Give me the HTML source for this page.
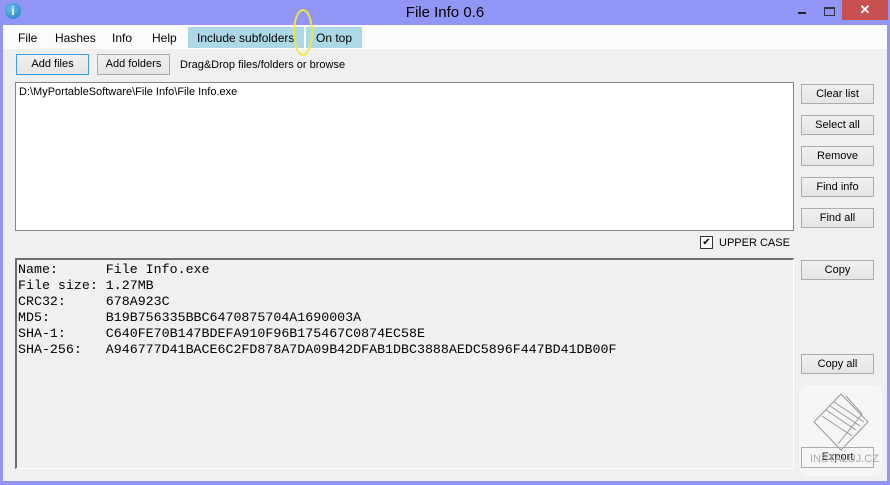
<!DOCTYPE html><html><head><style>
body{margin:0;width:890px;height:485px;background:#9095f6;position:relative;overflow:hidden;font-family:"Liberation Sans",sans-serif;font-size:11px;color:#000}
.a{position:absolute}
.body{left:3px;top:25px;width:884px;height:456px;background:#f0f0f0}
.btn{position:absolute;background:linear-gradient(#f0f0f0,#e5e5e5);border:1px solid #acacac;box-sizing:border-box;text-align:center;line-height:19px;font-size:11px}
.mono{font-family:"Liberation Mono",monospace;font-size:13.3px;line-height:16px;white-space:pre}
.m{top:31px;font-size:12px}
</style></head><body>
<div class="a" style="left:5px;top:3px;width:16px;height:16px;border-radius:50%;background:radial-gradient(circle at 40% 35%,#6cc0ee,#1a7bb8);color:#fff;font-weight:bold;font-size:12px;text-align:center;line-height:16px">i</div>
<div class="a" style="left:0;width:890px;top:4px;text-align:center;font-size:15px;color:#000">File Info 0.6</div>
<div class="a" style="left:798px;top:12px;width:8px;height:2px;background:#222"></div>
<div class="a" style="left:824px;top:7px;width:9px;height:6px;border:1px solid #334;border-top-width:2px"></div>
<div class="a" style="left:842px;top:0;width:46px;height:20px;background:#c75050;color:#fff;text-align:center;line-height:20px;font-size:13px;font-weight:bold">✕</div>
<div class="a body"></div>
<div class="a" style="left:3px;top:25px;width:884px;height:24px;background:#fbfbfb"></div>
<div class="a" style="left:188px;top:27px;width:116px;height:21px;background:#add8e6"></div>
<div class="a" style="left:306px;top:27px;width:56px;height:21px;background:#add8e6"></div>
<div class="a m" style="left:18px">File</div>
<div class="a m" style="left:55px">Hashes</div>
<div class="a m" style="left:112px">Info</div>
<div class="a m" style="left:152px">Help</div>
<div class="a m" style="left:197px">Include subfolders</div>
<div class="a m" style="left:316px">On top</div>
<div class="a" style="left:293px;top:9px;width:20px;height:47px;border:2px solid #f2ea3a;border-radius:50%;box-sizing:border-box"></div>
<div class="btn" style="left:16px;top:54px;width:73px;height:21px;border-color:#3c9ee8">Add files</div>
<div class="btn" style="left:97px;top:54px;width:73px;height:21px">Add folders</div>
<div class="a" style="left:180px;top:59px">Drag&amp;Drop files/folders or browse</div>
<div class="a" style="left:15px;top:82px;width:779px;height:149px;background:#fff;border:1px solid #828790;box-sizing:border-box"></div>
<div class="a" style="left:19px;top:86px">D:\MyPortableSoftware\File Info\File Info.exe</div>
<div class="btn" style="left:801px;top:84px;width:73px;height:20px">Clear list</div>
<div class="btn" style="left:801px;top:115px;width:73px;height:20px">Select all</div>
<div class="btn" style="left:801px;top:146px;width:73px;height:20px">Remove</div>
<div class="btn" style="left:801px;top:177px;width:73px;height:20px">Find info</div>
<div class="btn" style="left:801px;top:208px;width:73px;height:20px">Find all</div>
<div class="a" style="left:700px;top:236px;width:13px;height:13px;border:1px solid #333;background:#fff;box-sizing:border-box;font-size:10px;line-height:11px;text-align:center">✔</div>
<div class="a" style="left:719px;top:237px">UPPER CASE</div>
<div class="a" style="left:15px;top:258px;width:779px;height:211px;border-top:2px solid #6d6d6d;border-left:2px solid #6d6d6d;border-right:1px solid #fff;border-bottom:1px solid #fff;box-sizing:border-box;background:#f0f0f0"></div>
<div class="a mono" style="left:18px;top:262px">Name:      File Info.exe
File size: 1.27MB
CRC32:     678A923C
MD5:       B19B756335BBC6470875704A1690003A
SHA-1:     C640FE70B147BDEFA910F96B175467C0874EC58E
SHA-256:   A946777D41BACE6C2FD878A7DA09B42DFAB1DBC3888AEDC5896F447BD41DB00F</div>
<div class="btn" style="left:801px;top:260px;width:73px;height:20px">Copy</div>
<div class="btn" style="left:801px;top:354px;width:73px;height:20px">Copy all</div>
<div class="a" style="left:799px;top:385px;width:83px;height:91px;background:#f6f6f6;border-radius:8px"></div>
<svg class="a" style="left:806px;top:390px" width="70" height="65" viewBox="0 0 70 65"><g fill="none" stroke="#999" stroke-width="1"><path d="M35 4 L62 32 L35 60 L8 32 Z"/><path d="M20 20 L50 40 M24 16 L54 36 M28 12 L58 32 M16 26 L46 46 M40 6 L56 24 L32 54"/></g></svg>
<div class="btn" style="left:801px;top:447px;width:73px;height:21px;background:transparent;color:#222">Export</div>
<div class="a" style="left:810px;top:453px;color:#aaa;font-size:11px">INSTALUJ.CZ</div>
</body></html>
